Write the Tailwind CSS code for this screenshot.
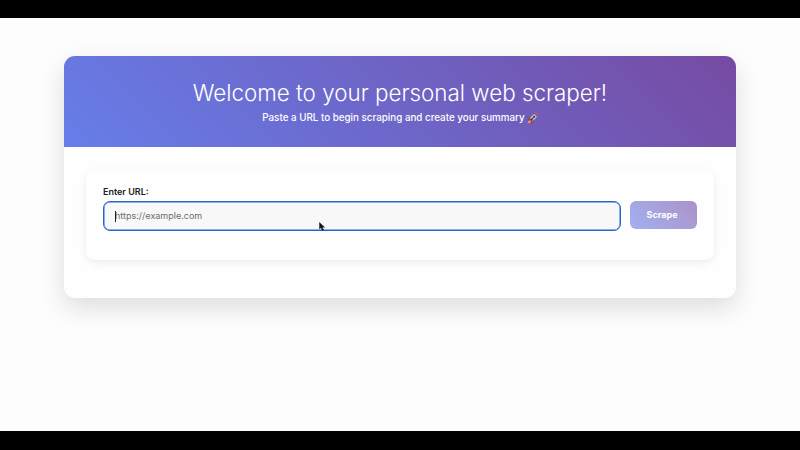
<!DOCTYPE html>
<html lang="en">
<head>
<meta charset="utf-8">
<title>Personal web scraper</title>
<script src="https://cdn.jsdelivr.net/npm/@tailwindcss/browser@4"></script>
</head>
<body class="h-[450px] w-[800px] overflow-hidden bg-black py-[18px] pb-[19px] font-['Inter',sans-serif]">
<main class="relative h-[413px] overflow-hidden bg-[#fdfdfd] px-16 pt-[38px]">
  <section class="h-[242px] rounded-[11px] bg-[#fefefe] shadow-[0_10px_26px_rgba(0,0,0,0.13)]">
    <header class="flex h-[91px] flex-col items-center rounded-t-[11px] bg-[linear-gradient(45deg,#667eea_0%,#764ba2_100%)] pt-[23px] text-white">
      <h1 class="whitespace-nowrap text-[22.4px] leading-7 font-light">Welcome to your personal web scraper!</h1>
      <p class="mt-[3px] flex items-center whitespace-nowrap text-[9.8px] leading-4 font-medium">
        <span>Paste a URL to begin scraping and create your summary</span>
        <svg class="ml-[2px] size-[11px]" viewBox="0 0 20 20" role="img" aria-label="rocket">
          <path d="M6 13 2 15.500 1 19l4-1.500L8 15z" fill="#f5a33c"/>
          <path d="M8 7 3 9 1 13l6-1zM13 12l-1 5-5 3 1-6z" fill="#c9303c"/>
          <path d="M19 1c-6 0-10 3-14 10l4 4c7-4 10-8 10-14z" fill="#bccad2"/>
          <path d="M19 1c-2 0-4 .5-5.500 1.200l4.300 4.300C18.600 5 19 3 19 1z" fill="#d93640"/>
          <path d="m5 12 8-5-4 8z" fill="#39444e"/>
          <circle cx="13" cy="7" r="2" fill="#263c50"/>
        </svg>
      </p>
    </header>
    <div class="px-[22px] pt-[22px]">
      <form class="h-[91px] rounded-[9px] bg-[#fefefe] px-[17px] pt-4 shadow-[0_3px_9px_rgba(0,0,0,0.07)]">
        <label for="url" class="block h-4 text-[9px] leading-[13px] font-semibold text-[#202124]">Enter URL:</label>
        <div class="flex items-start gap-[9px]">
          <div class="relative h-[30px] w-[518px]">
            <input id="url" type="text" placeholder="https://example.com" class="block h-[30px] w-full rounded-[7px] border border-[#2867ca] bg-[#f8f8f9] px-[11px] pb-px text-[9px] text-[#333] shadow-[inset_0_0_0_0.5px_#2867ca] outline-none placeholder:text-[#6d6d6d]">
            <span class="absolute top-[10px] left-[12px] h-[11px] w-px bg-[#222]"></span>
          </div>
          <button type="button" class="h-7 w-[67px] rounded-[6px] bg-[linear-gradient(45deg,#667eea_0%,#764ba2_100%)] pr-[3px] text-[9px] font-bold text-white opacity-60">Scrape</button>
        </div>
      </form>
    </div>
  </section>
  <svg class="absolute top-[204px] left-[319px] h-[9px] w-[6px]" viewBox="0 0 12 18" aria-hidden="true">
    <path d="M1 1v13l3-3 2.500 6 2.500-1-2.500-5.500H11z" fill="#111" stroke="#222" stroke-width="1"/>
  </svg>
</main>
</body>
</html>
